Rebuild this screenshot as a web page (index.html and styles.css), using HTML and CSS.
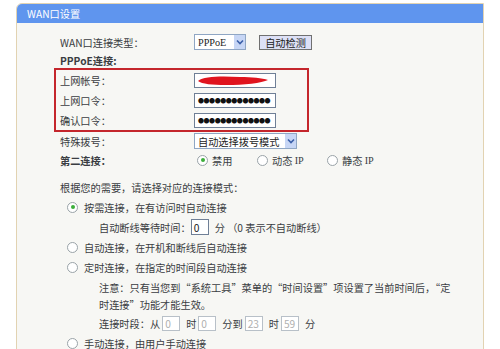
FILE: index.html
```html
<!DOCTYPE html>
<html lang="zh-CN">
<head>
  <meta charset="UTF-8">
  <title>WAN口设置</title>
  <link rel="stylesheet" href="styles.css">
</head>
<body>
  <div class="page">
    <div class="panel">
      <div class="panel-head">WAN口设置</div>
      <div class="panel-body">

        <!-- connection type -->
        <div class="row">
          <span class="label">WAN口连接类型：</span>
          <span class="select select-short">PPPoE<span class="arrow"><svg width="8" height="6" viewBox="0 0 8 6"><path d="M1 1.5 L4 4.5 L7 1.5" fill="none" stroke="#3b5fa8" stroke-width="1.6"/></svg></span></span>
          <span class="btn">自动检测</span>
        </div>
        <div class="row row-small">
          <span class="label bold">PPPoE连接:</span>
        </div>

        <!-- account box -->
        <div class="mark">
          <div class="row">
            <span class="label">上网帐号：</span>
            <span class="input input-wide">
              <svg class="scribble" width="74" height="11" viewBox="0 0 74 11"><path d="M2 6 C8 1 26 1 44 2 C56 2 66 3 72 5 C66 8 48 10 30 10 C16 10 6 9 2 6 Z" fill="#e0141e"/></svg>
            </span>
          </div>
          <div class="row">
            <span class="label">上网口令：</span>
            <span class="input input-wide dots">●●●●●●●●●●●●●</span>
          </div>
          <div class="row">
            <span class="label">确认口令：</span>
            <span class="input input-wide dots">●●●●●●●●●●●●●</span>
          </div>
        </div>

        <div class="row row-mid">
          <span class="label">特殊拨号：</span>
          <span class="select select-long">自动选择拨号模式<span class="arrow"><svg width="8" height="6" viewBox="0 0 8 6"><path d="M1 1.5 L4 4.5 L7 1.5" fill="none" stroke="#3b5fa8" stroke-width="1.6"/></svg></span></span>
        </div>
        <div class="row">
          <span class="label bold">第二连接：</span>
          <span class="opt opt-a"><span class="radio checked"></span>禁用</span>
          <span class="opt opt-b"><span class="radio"></span>动态&nbsp;<span class="latin">IP</span></span>
          <span class="opt"><span class="radio"></span>静态&nbsp;<span class="latin">IP</span></span>
        </div>

        <!-- connection modes -->
        <div class="row row-gap">根据您的需要，请选择对应的连接模式：</div>
        <div class="row mode"><span class="radio checked"></span>按需连接，在有访问时自动连接</div>
        <div class="row sub">自动断线等待时间：<span class="input input-num">0</span>分 （0 表示不自动断线）</div>
        <div class="row mode"><span class="radio"></span>自动连接，在开机和断线后自动连接</div>
        <div class="row mode"><span class="radio"></span>定时连接，在指定的时间段自动连接</div>
        <div class="note">注意：只有当您到“系统工具”菜单的“时间设置”项设置了当前时间后，“定<br>时连接”功能才能生效。</div>
        <div class="row sub">连接时段：从 <span class="input input-time">0</span>时 <span class="input input-time">0</span>分到 <span class="input input-time">23</span>时 <span class="input input-time">59</span>分</div>
        <div class="row mode"><span class="radio"></span>手动连接，由用户手动连接</div>

      </div>
    </div>
  </div>
</body>
</html>
```

FILE: styles.css
```css
body {
  margin: 0;
  background: #ffffff;
  font-family: "Noto Sans CJK SC", "DejaVu Sans", sans-serif;
  font-size: 10.2px;
  color: #3a3d42;
}
.page {
  padding: 3px 0 0 16px;
  height: 346px;
  overflow: hidden;
}
.panel {
  width: 466px;
  border: 1px solid #e2d3b2;
  border-top-left-radius: 6px;
  background: #f7f7f4;
  min-height: 400px;
}
.panel-head {
  height: 19px;
  line-height: 19px;
  padding-left: 10px;
  color: #ffffff;
  background: #5f95ee;
  border-top-left-radius: 5px;
}
.panel-body {
  padding: 9px 0 0 43px;
}
.row {
  display: flex;
  align-items: center;
  height: 20px;
  white-space: nowrap;
}
.row-small {
  height: 16px;
}
.row-mid {
  height: 18px;
}
.label {
  width: 134px;
  flex: none;
}
.bold {
  font-weight: bold;
}
.latin {
  font-family: "Liberation Serif", serif;
}
.mark {
  width: 247px;
  margin-left: -6px;
  padding-left: 4px;
  border: 2px solid #c4262c;
}
.select {
  position: relative;
  display: inline-flex;
  align-items: center;
  height: 14px;
  padding-left: 3px;
  border: 1px solid #8fa6c4;
  background: #ffffff;
  color: #222;
}
.select-short {
  width: 47px;
  font-family: "Liberation Serif", serif;
}
.select-long {
  width: 98px;
}
.arrow {
  position: absolute;
  right: 0;
  top: 0;
  width: 11px;
  height: 14px;
  display: flex;
  align-items: center;
  justify-content: center;
  background: #c7d6f5;
}
.btn {
  margin-left: 13px;
  width: 51px;
  height: 13px;
  line-height: 13px;
  text-align: center;
  border: 1px solid #707070;
  background: #dde0f6;
  color: #222;
}
.input {
  display: inline-flex;
  align-items: center;
  height: 13px;
  border: 1px solid #6f7f96;
  background: #ffffff;
}
.input-wide {
  width: 80px;
}
.scribble {
  margin-left: 1px;
}
.dots {
  padding-left: 3px;
  width: 77px;
  overflow: hidden;
  font-size: 6px;
  letter-spacing: -0.45px;
  color: #111;
}
.opt {
  display: inline-flex;
  align-items: center;
}
.opt-a {
  width: 60px;
  margin-left: 3px;
}
.opt-b {
  width: 70px;
}
.radio {
  width: 9px;
  height: 9px;
  margin-right: 4px;
  border: 1px solid #9aa3a8;
  border-radius: 50%;
  background: #ffffff;
  position: relative;
  flex: none;
}
.radio.checked::after {
  content: "";
  position: absolute;
  left: 2.5px;
  top: 2.5px;
  width: 4px;
  height: 4px;
  border-radius: 50%;
  background: #3cae3a;
}
.row-gap {
  margin-top: 7px;
}
.mode {
  margin-left: 7px;
}
.mode .radio {
  margin-right: 6px;
}
.sub {
  margin-left: 39px;
}
.input-num {
  width: 14px;
  height: 14px;
  padding-left: 2px;
  margin: 0 6px 0 0;
  color: #222;
}
.input-time {
  width: 14px;
  height: 13px;
  padding-left: 2px;
  margin: 0 6px 0 2px;
  border-color: #b8c0c8;
  color: #b0b0b0;
}
.note {
  margin: 2px 0 0 39px;
  line-height: 17px;
}
```
